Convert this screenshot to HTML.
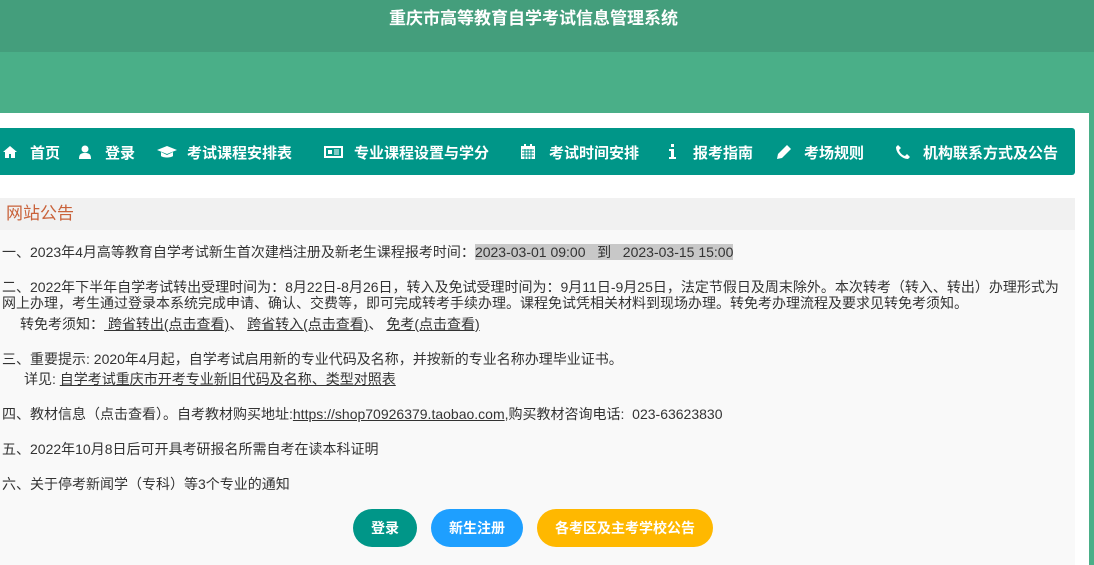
<!DOCTYPE html>
<html><head><meta charset="utf-8"><style>
body{margin:0;width:1094px;height:565px;overflow:hidden;background:#4aaf88;font-family:"Liberation Sans","Noto Sans CJK SC",sans-serif;}
.top{height:52px;background:#449e7c;color:#fff;text-align:center;font-size:17px;font-weight:bold;line-height:38px;padding-right:27px;}
.wrap{position:absolute;left:0;top:113px;width:1089px;height:452px;background:#fff;}
.nav{position:absolute;left:0;top:15px;width:1075px;height:47px;background:#009688;border-radius:0 3px 3px 0;color:#fff;font-size:15px;font-weight:bold;}
.nav span{position:absolute;top:14px;white-space:nowrap;}
.nav svg{position:absolute;}
.panel{position:absolute;left:0;top:85px;width:1075px;height:367px;background:#f9f9f9;}
.ph{height:32px;background:#f1f1f1;color:#c9623a;font-size:17px;line-height:32px;padding-left:6px;}
.t{position:absolute;left:2px;font-size:14px;color:#333;white-space:nowrap;line-height:16px;}
.t u{text-decoration:underline;}
.hl{background:#c8c8c8;}
.btn{position:absolute;top:311px;height:38px;border-radius:19px;color:#fff;font-size:14px;font-weight:bold;text-align:center;line-height:38px;}
</style></head><body>
<div class="top">重庆市高等教育自学考试信息管理系统</div>
<div class="wrap">
<div class="nav">
<svg style="left:3px;top:18px" width="14" height="12" viewBox="0 0 14 12"><path d="M7 0L0 6h2v6h4V8h2v4h4V6h2z" fill="#fff"/></svg>
<span style="left:30px">首页</span>
<svg style="left:79px;top:17px" width="12" height="14" viewBox="0 0 12 14"><circle cx="6" cy="4" r="3.5" fill="#fff"/><path d="M0 14c0-5 2-6 6-6s6 1 6 6z" fill="#fff"/></svg>
<span style="left:105px">登录</span>
<svg style="left:157px;top:18px" width="20" height="12" viewBox="0 0 20 12"><path d="M0 4L10 0l10 4-10 4z M4 6v4c2 2 10 2 12 0V6l-6 3z" fill="#fff"/></svg>
<span style="left:187px">考试课程安排表</span>
<svg style="left:324px;top:18px" width="19" height="12" viewBox="0 0 19 12"><rect x="1" y="1" width="17" height="10" fill="none" stroke="#fff" stroke-width="2"/><rect x="4" y="4" width="4" height="4" fill="#fff"/><path d="M10 4h5M10 6h5M10 8h5" stroke="#fff"/></svg>
<span style="left:354px">专业课程设置与学分</span>
<svg style="left:521px;top:16px" width="14" height="15" viewBox="0 0 14 15"><rect x="0" y="2" width="14" height="13" fill="#fff"/><path d="M1 6h12M1 9h12M1 12h12M4 5v10M7 5v10M10 5v10" stroke="#009688"/><rect x="3" y="0" width="2" height="4" fill="#fff"/><rect x="9" y="0" width="2" height="4" fill="#fff"/></svg>
<span style="left:549px">考试时间安排</span>
<svg style="left:669px;top:16px" width="7" height="15" viewBox="0 0 7 15"><rect x="2" y="0" width="3" height="3" fill="#fff"/><path d="M0 5h5v8h2v2H0v-2h2V7H0z" fill="#fff"/></svg>
<span style="left:693px">报考指南</span>
<svg style="left:777px;top:17px" width="14" height="14" viewBox="0 0 14 14"><path d="M10 0l4 4-9 9-5 1 1-5z" fill="#fff"/></svg>
<span style="left:804px">考场规则</span>
<svg style="left:896px;top:17px" width="14" height="14" viewBox="0 0 14 14"><path d="M2 0l3 3-2 2c1 3 3 5 6 6l2-2 3 3-2 2C6 14 0 8 0 2z" fill="#fff"/></svg>
<span style="left:923px">机构联系方式及公告</span>
</div>
<div class="panel">
<div class="ph">网站公告</div>
<div class="t" style="top:46px">一、2023年4月高等教育自学考试新生首次建档注册及新老生课程报考时间：<span class="hl">2023-03-01 09:00 &nbsp; 到 &nbsp; 2023-03-15 15:00</span></div>
<div class="t" style="top:81px">二、2022年下半年自学考试转出受理时间为：8月22日-8月26日，转入及免试受理时间为：9月11日-9月25日，法定节假日及周末除外。本次转考（转入、转出）办理形式为</div>
<div class="t" style="top:97px">网上办理，考生通过登录本系统完成申请、确认、交费等，即可完成转考手续办理。课程免试凭相关材料到现场办理。转免考办理流程及要求见转免考须知。</div>
<div class="t" style="top:118px;left:20px">转免考须知：<u> 跨省转出(点击查看)</u>、 <u>跨省转入(点击查看)</u>、 <u>免考(点击查看)</u></div>
<div class="t" style="top:153px">三、重要提示: 2020年4月起，自学考试启用新的专业代码及名称，并按新的专业名称办理毕业证书。</div>
<div class="t" style="top:173px;left:24px">详见: <u>自学考试重庆市开考专业新旧代码及名称、类型对照表</u></div>
<div class="t" style="top:208px">四、教材信息（点击查看）。自考教材购买地址:<u>https://shop70926379.taobao.com</u>,购买教材咨询电话:&nbsp; 023-63623830</div>
<div class="t" style="top:243px">五、2022年10月8日后可开具考研报名所需自考在读本科证明</div>
<div class="t" style="top:278px">六、关于停考新闻学（专科）等3个专业的通知</div>
<div class="btn" style="left:353px;width:64px;background:#009688">登录</div>
<div class="btn" style="left:431px;width:92px;background:#1e9fff">新生注册</div>
<div class="btn" style="left:537px;width:176px;background:#ffb800">各考区及主考学校公告</div>
</div>
</div>
</body></html>
